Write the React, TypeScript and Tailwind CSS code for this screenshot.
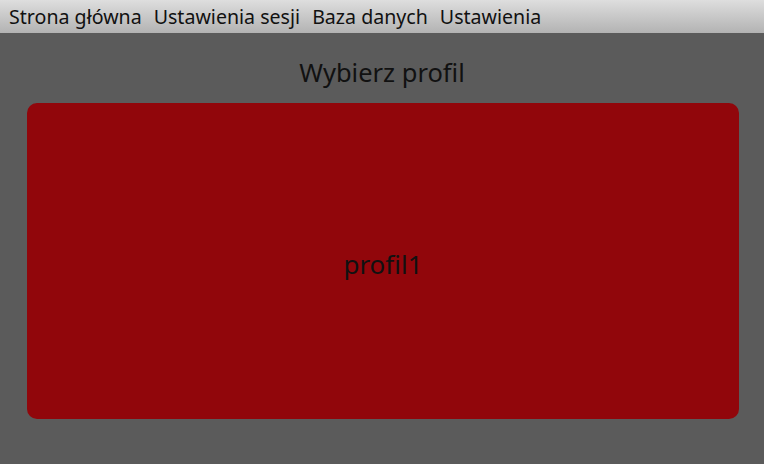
export default function App() {
  const menu = ["Strona główna", "Ustawienia sesji", "Baza danych", "Ustawienia"];
  return (
    <div
      className="w-[764px] h-[464px] bg-[#5b5b5b] flex flex-col"
      style={{ fontFamily: '"Noto Sans", "Open Sans", sans-serif' }}
    >
      <div className="h-[33px] bg-gradient-to-b from-[#dedede] to-[#b3b3b3] flex items-center pl-[9px] gap-[12px] text-[19.6px] text-[#111]">
        {menu.map((m) => (
          <span key={m}>{m}</span>
        ))}
      </div>
      <div className="text-center text-[25.5px] text-[#111] mt-[19px] h-[51px] leading-[40px]">Wybierz profil</div>
      <div className="ml-[27px] mr-[25px] h-[316px] bg-[#91060b] rounded-[10px] flex items-center justify-center text-[26px] text-[#111] pt-[6px]">
        profil1
      </div>
    </div>
  );
}
